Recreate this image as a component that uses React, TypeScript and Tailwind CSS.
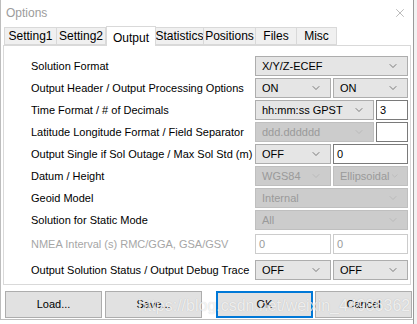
import { ChevronDown, X } from 'lucide-react'

const tabs = ['Setting1', 'Setting2', 'Output', 'Statistics', 'Positions', 'Files', 'Misc']
const tabWidths = ['w-[53px]', 'w-[50px]', 'w-[50px]', 'w-[49px]', 'w-[53px]', 'w-[42px]', 'w-[41px]']

function Select({ value, disabled, className }: { value: string; disabled?: boolean; className: string }) {
  return (
    <div
      className={`h-[20px] flex items-center justify-between pl-[6px] pr-[8px] border ${
        disabled ? 'bg-[#cccccc] border-[#bfbfbf] text-[#9a9a9a]' : 'bg-[#e5e5e5] border-[#adadad] text-black'
      } ${className}`}
    >
      <span>{value}</span>
      <ChevronDown className={`w-[12px] h-[12px] ${disabled ? 'text-[#b3b3b3]' : 'text-[#555555]'}`} strokeWidth={1.5} />
    </div>
  )
}

function Input({ value, disabled, className }: { value: string; disabled?: boolean; className: string }) {
  return (
    <div
      className={`h-[20px] flex items-center pl-[3px] bg-white border ${
        disabled ? 'border-[#cccccc] text-[#9a9a9a]' : 'border-[#7a7a7a] text-black'
      } ${className}`}
    >
      {value}
    </div>
  )
}

function Row({ label, muted, className, children }: { label: string; muted?: boolean; className?: string; children: React.ReactNode }) {
  return (
    <div className={`flex items-center h-[20px] ${className ?? ''}`}>
      <div className={`flex-1 ${muted ? 'text-[#a6a6a6]' : 'text-black'}`}>{label}</div>
      <div className="w-[153px] flex gap-[2px]">{children}</div>
    </div>
  )
}

export default function App() {
  return (
    <div
      className="w-[417px] h-[324px] relative overflow-hidden bg-white flex text-[11px]"
      style={{ fontFamily: '"Liberation Sans", Arial, sans-serif' }}
    >
      {/* Dialog */}
      <div className="w-[413px] h-[320px] bg-white border-l border-[#bdbdbd] border-b flex flex-col">
        {/* Title bar */}
        <div className="h-[26px] flex items-center justify-between pl-[5px] pr-[6px]">
          <span className="text-[12px] text-[#9c9c9c]">Options</span>
          <X className="w-[14px] h-[14px] text-[#8a8a8a]" strokeWidth={1} />
        </div>

        {/* Tabs */}
        <div className="flex items-end h-[19px] pl-[3px]">
          {tabs.map((t, i) =>
            t === 'Output' ? (
              <div
                key={t}
                className={`${tabWidths[i]} h-[20px] -mb-px z-10 bg-white border border-b-0 border-[#d9d9d9] flex items-start pt-[2px] justify-center text-[12px]`}
              >
                {t}
              </div>
            ) : (
              <div
                key={t}
                className={`${tabWidths[i]} h-[18px] bg-[#f0f0f0] border border-[#d9d9d9] -ml-px first:ml-0 flex items-center justify-center text-[12px]`}
              >
                {t}
              </div>
            )
          )}
        </div>

        {/* Panel */}
        <div className="ml-[2px] w-[408px] h-[240px] border border-[#d9d9d9] pt-[10px] pl-[27px] pr-[2px] flex flex-col gap-[2px]">
          <Row label="Solution Format">
            <Select value="X/Y/Z-ECEF" className="w-full" />
          </Row>
          <Row label="Output Header / Output Processing Options">
            <Select value="ON" className="w-[76px]" />
            <Select value="ON" className="w-[75px]" />
          </Row>
          <Row label="Time Format / # of Decimals">
            <Select value="hh:mm:ss GPST" className="w-[119px]" />
            <Input value="3" className="w-[32px]" />
          </Row>
          <Row label="Latitude Longitude Format / Field Separator">
            <Select value="ddd.dddddd" disabled className="w-[119px]" />
            <Input value="" className="w-[32px]" />
          </Row>
          <Row label="Output Single if Sol Outage / Max Sol Std (m)">
            <Select value="OFF" className="w-[76px]" />
            <Input value="0" className="w-[75px]" />
          </Row>
          <Row label="Datum / Height">
            <Select value="WGS84" disabled className="w-[76px]" />
            <Select value="Ellipsoidal" disabled className="w-[75px]" />
          </Row>
          <Row label="Geoid Model">
            <Select value="Internal" disabled className="w-full" />
          </Row>
          <Row label="Solution for Static Mode">
            <Select value="All" disabled className="w-full" />
          </Row>
          <Row label="NMEA Interval (s) RMC/GGA, GSA/GSV" muted className="mt-[2px]">
            <Input value="0" disabled className="w-[76px]" />
            <Input value="0" disabled className="w-[75px]" />
          </Row>
          <Row label="Output Solution Status / Output Debug Trace" className="mt-[4px]">
            <Select value="OFF" className="w-[76px]" />
            <Select value="OFF" className="w-[75px]" />
          </Row>
        </div>

        {/* Buttons */}
        <div className="flex items-center mt-[6px] pl-[4px] h-[27px]">
          <button className="w-[97px] h-[27px] bg-[#e1e1e1] border border-[#adadad]">Load...</button>
          <button className="w-[97px] h-[27px] ml-[3px] bg-[#e1e1e1] border border-[#adadad]">Save...</button>
          <button className="w-[97px] h-[27px] ml-[14px] bg-[#e1e1e1] border-2 border-[#0078d7]">OK</button>
          <button className="w-[97px] h-[27px] ml-[2px] bg-[#e1e1e1] border border-[#adadad]">Cancel</button>
        </div>
      </div>

      {/* Background window strip */}
      <div className="flex-1 h-full bg-[#f3f3f3] border-l border-[#9a9a9a]" />

      {/* Watermark */}
      <div
        className="absolute left-[138px] top-[294px] text-[16px] text-white/75 whitespace-nowrap pointer-events-none"
        style={{ textShadow: '0 0 1px rgba(0,0,0,0.2)' }}
      >
        https://blog.csdn.net/weixin_44986362
      </div>
    </div>
  )
}
